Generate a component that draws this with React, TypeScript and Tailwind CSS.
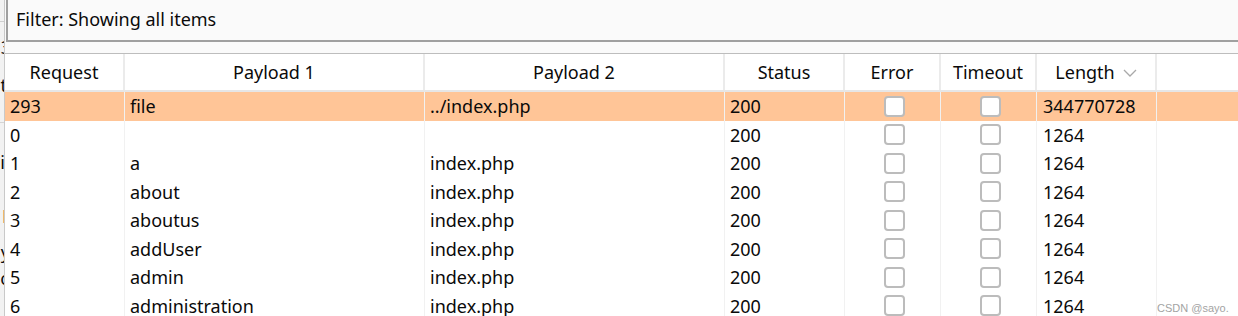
import React from "react";

const font = { fontFamily: '"Noto Sans", "Open Sans", Arial, sans-serif' };

type Row = { req: string; p1: string; p2: string; status: string; len: string; hl?: boolean };

const rows: Row[] = [
  { req: "293", p1: "file", p2: "../index.php", status: "200", len: "344770728", hl: true },
  { req: "0", p1: "", p2: "", status: "200", len: "1264" },
  { req: "1", p1: "a", p2: "index.php", status: "200", len: "1264" },
  { req: "2", p1: "about", p2: "index.php", status: "200", len: "1264" },
  { req: "3", p1: "aboutus", p2: "index.php", status: "200", len: "1264" },
  { req: "4", p1: "addUser", p2: "index.php", status: "200", len: "1264" },
  { req: "5", p1: "admin", p2: "index.php", status: "200", len: "1264" },
  { req: "6", p1: "administration", p2: "index.php", status: "200", len: "1264" },
];

function Checkbox() {
  return <div className="w-[21px] h-[21px] border-2 border-[#bcbcbc] rounded-[4px] bg-white" />;
}

function Chevron() {
  return (
    <svg width="14" height="8" viewBox="0 0 14 8" className="ml-[8px] mt-[2px]">
      <path d="M1 1 L7 7 L13 1" fill="none" stroke="#a9a9a9" strokeWidth="1.3" />
    </svg>
  );
}

export default function App() {
  return (
    <div
      className="w-[1238px] h-[316px] overflow-hidden bg-[#fafafa] flex text-[18px] text-[#0a0a0a]"
      style={font}
    >
      {/* clipped neighbouring panel */}
      <div className="w-[5px] shrink-0 h-full bg-[#f2f2f2] border-r border-[#c9c9c9] overflow-hidden flex flex-col items-end leading-none">
        <div className="w-full h-[21px] shrink-0" />
        <div className="w-full h-[1px] shrink-0 bg-[#cfcfcf]" />
        <div className="mt-[16px] shrink-0 -mr-[7px]">3</div>
        <div className="mt-[20px] shrink-0 -mr-[3px]">t</div>
        <div className="w-full h-[1px] shrink-0 bg-[#d5d5d5] mt-[28px]" />
        <div className="mt-[30px] shrink-0 -mr-[1px]">i</div>
        <div className="mt-[36px] shrink-0 -mr-[8px] text-[#e8643c] font-bold">F</div>
        <div className="mt-[18px] shrink-0 -mr-[6px]">y</div>
        <div className="mt-[8px] shrink-0 -mr-[5px]">c</div>
      </div>

      <div className="flex-1 flex flex-col min-w-0 h-full overflow-hidden">
        {/* filter bar */}
        <div className="h-[42px] shrink-0 ml-[1px] border-l-2 border-b-2 border-[#a0a0a0] bg-[#fafafa] flex items-center pl-[8px] pb-[2px] leading-none">
          Filter: Showing all items
        </div>
        <div className="h-[12px] shrink-0 border-b border-[#bdbdbd]" />

        {/* header */}
        <div className="h-[38px] bg-white border-b-2 border-[#e6e6e6] flex leading-none shrink-0">
          {[
            ["Request", "w-[120px]"],
            ["Payload 1", "w-[300px]"],
            ["Payload 2", "w-[300px]"],
            ["Status", "w-[120px]"],
            ["Error", "w-[96px]"],
            ["Timeout", "w-[96px]"],
          ].map(([t, w]) => (
            <div key={t} className={`${w} shrink-0 h-full border-r-2 border-[#ebebeb] flex items-center justify-center`}>
              {t}
            </div>
          ))}
          <div className="w-[120px] shrink-0 h-full border-r-2 border-[#ebebeb] flex items-center justify-center">
            Length
            <Chevron />
          </div>
          <div className="flex-1" />
        </div>

        {/* body */}
        <div className="flex flex-col bg-white shrink-0 leading-none">
          {rows.map((r) => (
            <div key={r.req} className={`h-[28.5px] shrink-0 flex ${r.hl ? "bg-[#ffc597]" : "bg-white"}`}>
              <div className="w-[120px] shrink-0 pl-[5px] flex items-center border-r border-[#f1f1f1]">{r.req}</div>
              <div className="w-[300px] shrink-0 pl-[5px] flex items-center border-r border-[#f1f1f1]">{r.p1}</div>
              <div className="w-[300px] shrink-0 pl-[5px] flex items-center border-r border-[#f1f1f1]">{r.p2}</div>
              <div className="w-[120px] shrink-0 pl-[5px] flex items-center border-r border-[#f1f1f1]">{r.status}</div>
              <div className="w-[96px] shrink-0 pl-[4px] flex items-center justify-center border-r border-[#f1f1f1]">
                <Checkbox />
              </div>
              <div className="w-[96px] shrink-0 pl-[4px] flex items-center justify-center border-r border-[#f1f1f1]">
                <Checkbox />
              </div>
              <div className="w-[120px] shrink-0 pl-[6px] flex items-center border-r border-[#f1f1f1]">{r.len}</div>
              <div className="flex-1 flex items-center justify-end pr-[16px] pt-[6px]">
                {r.req === "6" ? (
                  <span className="text-[11px] whitespace-nowrap text-[#a3a3a3]" style={{ fontFamily: '"Liberation Sans", Arial, sans-serif' }}>
                    CSDN @sayo.
                  </span>
                ) : null}
              </div>
            </div>
          ))}
        </div>
      </div>
    </div>
  );
}
